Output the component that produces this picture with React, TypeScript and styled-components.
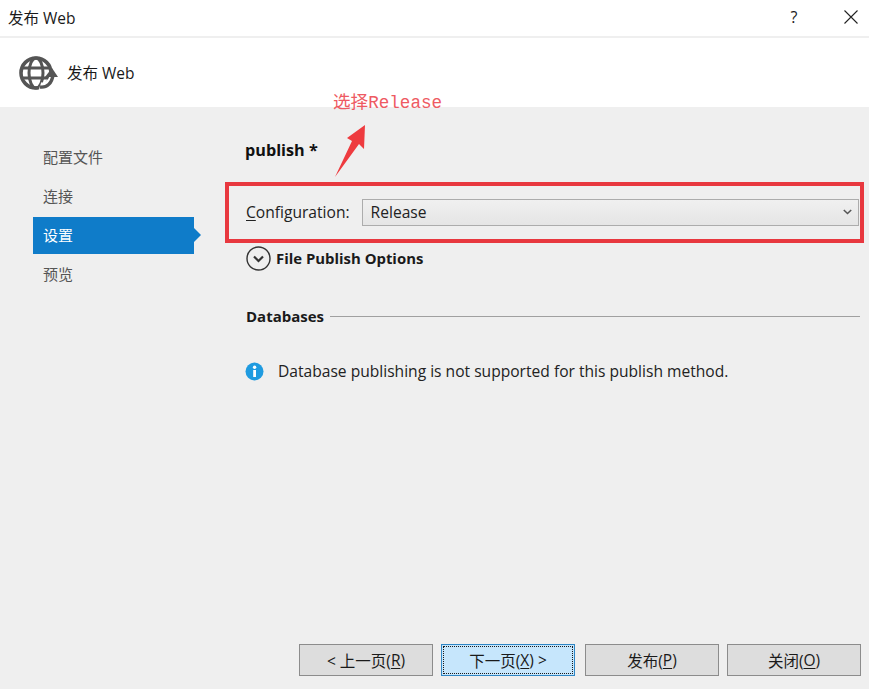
import React from 'react';
import styled, { createGlobalStyle } from 'styled-components';

const GlobalStyle = createGlobalStyle`
    html, body {
        margin: 0;
        padding: 0;
        background: #efefef;
    }
`;

const UI_FONT = `"Open Sans", "Noto Sans CJK SC", sans-serif`;

const Dialog = styled.div`
    position: relative;
    width: 869px;
    height: 689px;
    overflow: hidden;
    display: flex;
    flex-direction: column;
    background: #efefef;
    color: #1a1a1a;
    font-family: ${UI_FONT};
`;

const TitleBar = styled.div`
    height: 36px;
    box-sizing: border-box;
    flex: none;
    display: flex;
    align-items: center;
    padding: 0 0 2px 8px;
    margin-bottom: 2px;
    background: #fff;
    font-size: 15.500px;
`;

const TitleText = styled.span`
    flex: 1;
`;

const Help = styled.span`
    width: 16px;
    margin-right: 42px;
    text-align: center;
    font-size: 16px;
`;

const CloseIcon = styled.svg`
    width: 14px;
    height: 14px;
    margin-right: 11px;
`;

const Banner = styled.div`
    height: 69px;
    flex: none;
    display: flex;
    align-items: center;
    gap: 9px;
    padding-left: 18px;
    background: #fff;
    font-size: 15.500px;
`;

const Body = styled.div`
    flex: 1;
    display: flex;
    min-height: 0;
`;

const Sidebar = styled.nav`
    width: 161px;
    flex: none;
    margin-left: 33px;
    padding-top: 32px;
    display: flex;
    flex-direction: column;
    align-items: stretch;
`;

const NavItem = styled.div<{ $active?: boolean }>`
    position: relative;
    height: 37px;
    margin-bottom: 2px;
    padding-left: 10px;
    line-height: 36px;
    font-size: 15px;
    color: ${(p) => (p.$active ? '#fff' : '#555')};
    background: ${(p) => (p.$active ? '#0f7cc9' : 'transparent')};

    ${(p) =>
        p.$active &&
        `&::after {
            content: '';
            position: absolute;
            left: 100%;
            top: 11px;
            border-left: 7px solid #0f7cc9;
            border-top: 7px solid transparent;
            border-bottom: 7px solid transparent;
        }`}
`;

const Main = styled.main`
    flex: 1;
    min-width: 0;
    padding: 30px 9px 0 51px;
    display: flex;
    flex-direction: column;
`;

const ProfileName = styled.div`
    height: 26px;
    line-height: 26px;
    font-size: 16.200px;
    font-weight: 700;
    color: #111;
`;

const ConfigRow = styled.div`
    margin-top: 35px;
    height: 28px;
    display: flex;
    align-items: center;
    gap: 12px;
    padding: 0 1px;
    font-size: 15.600px;
    color: #222;
`;

const AccessKey = styled.span`
    text-decoration: underline;
    text-underline-offset: 2px;
`;

const Select = styled.div`
    flex: 1;
    height: 27px;
    box-sizing: border-box;
    display: flex;
    align-items: center;
    justify-content: space-between;
    padding: 0 6px 0 8px;
    border: 1px solid #acacac;
    background: linear-gradient(#f0f0f0, #e5e5e5);
`;

const Expander = styled.div`
    margin-top: 19px;
    height: 26px;
    display: flex;
    align-items: center;
    gap: 5px;
    padding-left: 1px;
    font-size: 14.900px;
    font-weight: 700;
    color: #1a1a1a;
`;

const SectionHead = styled.div`
    margin-top: 35px;
    height: 20px;
    display: flex;
    align-items: center;
    gap: 6px;
    padding-left: 1px;
    font-size: 15px;
    font-weight: 700;
    color: #1a1a1a;
`;

const Rule = styled.div`
    flex: 1;
    height: 1px;
    background: #a0a0a0;
`;

const InfoRow = styled.div`
    margin-top: 35px;
    height: 20px;
    display: flex;
    align-items: center;
    gap: 14px;
    font-size: 15.600px;
    color: #222;
`;

const Footer = styled.footer`
    flex: none;
    height: 45px;
    display: flex;
    justify-content: flex-end;
    gap: 8px;
    padding-right: 8px;
`;

const FooterButton = styled.div<{ $primary?: boolean }>`
    width: 134px;
    height: 32px;
    box-sizing: border-box;
    display: flex;
    align-items: center;
    justify-content: center;
    white-space: pre;
    font-size: 15.500px;
    color: #1a1a1a;
    border: 1px solid ${(p) => (p.$primary ? '#2f86c5' : '#8c8c8c')};
    background: ${(p) => (p.$primary ? '#c6e6fc' : '#dddddd')};

    ${(p) =>
        p.$primary &&
        `outline: 1px dotted #1a1a1a;
        outline-offset: -3px;
        margin-right: 2px;`}
`;

/* annotations painted on top of the screenshot */
const NoteText = styled.div`
    position: absolute;
    left: 333px;
    top: 91px;
    font-family: "Liberation Mono", "Noto Sans CJK SC", monospace;
    font-size: 17.600px;
    line-height: 24px;
    color: #ee5a62;
    white-space: nowrap;
`;

const NoteArrow = styled.svg`
    position: absolute;
    left: 332px;
    top: 122px;
    width: 36px;
    height: 58px;
`;

const NoteBox = styled.div`
    position: absolute;
    left: 225px;
    top: 182px;
    width: 639px;
    height: 61px;
    box-sizing: border-box;
    border: 4px solid #e8383f;
`;

const GlobeIcon = () => (
    <svg width="40" height="38" viewBox="0 0 40 38" fill="none" stroke="#555">
        <circle cx="18" cy="19" r="15" strokeWidth="3.600" />
        <ellipse cx="18" cy="19" rx="7" ry="15" strokeWidth="3" />
        <path d="M3 14h30M3 24h30" strokeWidth="3" />
        <path d="M22 32c6 2 13-3 14-12" stroke="#fff" strokeWidth="8" />
        <path d="M22 33c7 1 12-4 13-12" strokeWidth="3.400" />
        <path d="M27 23l7-9 6 9z" fill="#555" stroke="none" />
    </svg>
);

const ChevronCircle = () => (
    <svg width="25" height="25" viewBox="0 0 25 25" fill="none">
        <circle cx="12.500" cy="12.500" r="11.500" stroke="#333" strokeWidth="1.400" />
        <path d="M8 10.500l4.500 4.500 4.500-4.500" stroke="#333" strokeWidth="2.200" />
    </svg>
);

const InfoIcon = () => (
    <svg width="19" height="19" viewBox="0 0 19 19">
        <circle cx="9.500" cy="9.500" r="9" fill="#1f9be0" />
        <rect x="8.200" y="8" width="2.800" height="7" fill="#fff" />
        <circle cx="9.600" cy="5.300" r="1.700" fill="#fff" />
    </svg>
);

const navItems = ['配置文件', '连接', '设置', '预览'];

export default function App() {
    return (
        <Dialog>
            <GlobalStyle />
            <TitleBar>
                <TitleText>发布 Web</TitleText>
                <Help>?</Help>
                <CloseIcon viewBox="0 0 14 14">
                    <path d="M0.500 0.500l13 13M13.500 0.500l-13 13" stroke="#222" strokeWidth="1.100" />
                </CloseIcon>
            </TitleBar>
            <Banner>
                <GlobeIcon />
                <span>发布 Web</span>
            </Banner>
            <Body>
                <Sidebar>
                    {navItems.map((item) => (
                        <NavItem key={item} $active={item === '设置'}>
                            {item}
                        </NavItem>
                    ))}
                </Sidebar>
                <Main>
                    <ProfileName>publish *</ProfileName>
                    <ConfigRow>
                        <span>
                            <AccessKey>C</AccessKey>onfiguration:
                        </span>
                        <Select>
                            <span>Release</span>
                            <svg width="9" height="6" viewBox="0 0 9 6" fill="none">
                                <path d="M0.800 1l3.700 3.500L8.200 1" stroke="#555" strokeWidth="1.600" />
                            </svg>
                        </Select>
                    </ConfigRow>
                    <Expander>
                        <ChevronCircle />
                        File Publish Options
                    </Expander>
                    <SectionHead>
                        Databases
                        <Rule />
                    </SectionHead>
                    <InfoRow>
                        <InfoIcon />
                        Database publishing is not supported for this publish method.
                    </InfoRow>
                </Main>
            </Body>
            <Footer>
                <FooterButton>
                    &lt; 上一页(<AccessKey>R</AccessKey>)
                </FooterButton>
                <FooterButton $primary>
                    下一页(<AccessKey>X</AccessKey>) &gt;
                </FooterButton>
                <FooterButton>
                    发布(<AccessKey>P</AccessKey>)
                </FooterButton>
                <FooterButton>
                    关闭(<AccessKey>O</AccessKey>)
                </FooterButton>
            </Footer>
            <NoteText>选择Release</NoteText>
            <NoteArrow viewBox="0 0 36 58">
                <path d="M3 55L20 19l-5-3L33 3l-1 24-5-5z" fill="#ee3b3f" />
            </NoteArrow>
            <NoteBox />
        </Dialog>
    );
}
